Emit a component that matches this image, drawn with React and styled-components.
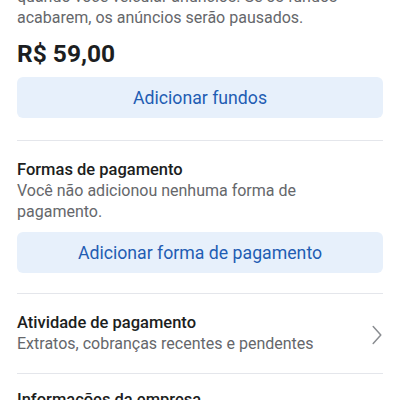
import React from 'react';
import styled, { createGlobalStyle } from 'styled-components';

const Global = createGlobalStyle`
  html, body {
    margin: 0;
    padding: 0;
    background: #ffffff;
    font-family: Roboto, "Noto Sans", sans-serif;
    overflow: hidden;
  }
`

const Page = styled.div`
  width: 400px;
  height: 400px;
  overflow: hidden;
  background: #fff;
`

// the screen is scrolled: the intro paragraph starts above the top edge
const Content = styled.div`
  margin-top: -14px;
  padding: 0 17px;
`

const Section = styled.div`
  display: flex;
  flex-direction: column;
  padding: ${(p) => p.pad || '0'};
  border-bottom: ${(p) => (p.last ? 'none' : '1px solid #e4e6eb')};
`

const Muted = styled.p`
  margin: 0;
  font-size: 16px;
  line-height: 21px;
  color: #65676b;
`

const Amount = styled.div`
  margin-top: 11px;
  font-size: 24.5px;
  font-weight: 700;
  line-height: 30px;
  color: #1c1e21;
`

const Title = styled.div`
  font-size: 16.5px;
  font-weight: 500;
  line-height: 21px;
  color: #1c1e21;
`

const SoftButton = styled.button`
  margin-top: ${(p) => p.top || '10px'};
  height: 41px;
  width: 100%;
  border: none;
  border-radius: 6px;
  background: #e7f0fb;
  color: #1f5db3;
  font-family: Roboto, "Noto Sans", sans-serif;
  font-size: 17.7px;
  font-weight: 400;
  cursor: pointer;
`

const Row = styled.div`
  display: flex;
  align-items: center;
  justify-content: space-between;
  padding: 18px 0 19px;
  border-bottom: 1px solid #e4e6eb;
`

const RowText = styled.div`
  display: flex;
  flex-direction: column;
`

const ChevronBox = styled.div`
  display: flex;
  margin: 3px 1px 0 0;
`

const Chevron = () => (
  <ChevronBox>
    <svg width="10" height="20" viewBox="0 0 10 20" fill="none">
      <path d="M1.2 1.5 L8.8 10 L1.2 18.5" stroke="#8a8d91" strokeWidth="1.5" strokeLinecap="round" strokeLinejoin="round" />
    </svg>
  </ChevronBox>
)

export default function App() {
  return (
    <Page>
      <Global />
      <Content>
        <Section pad="0 0 22px">
          <Muted>
            quando você veicular anúncios. Se os fundos<br />
            acabarem, os anúncios serão pausados.
          </Muted>
          <Amount>R$ 59,00</Amount>
          <SoftButton top="8px">Adicionar fundos</SoftButton>
        </Section>
        <Section pad="18px 0 20px">
          <Title>Formas de pagamento</Title>
          <Muted>Você não adicionou nenhuma forma de<br />pagamento.</Muted>
          <SoftButton top="10px">Adicionar forma de pagamento</SoftButton>
        </Section>
        <Row>
          <RowText>
            <Title>Atividade de pagamento</Title>
            <Muted>Extratos, cobranças recentes e pendentes</Muted>
          </RowText>
          <Chevron />
        </Row>
        <Section pad="15px 0" last>
          <Title>Informações da empresa</Title>
        </Section>
      </Content>
    </Page>
  );
}
